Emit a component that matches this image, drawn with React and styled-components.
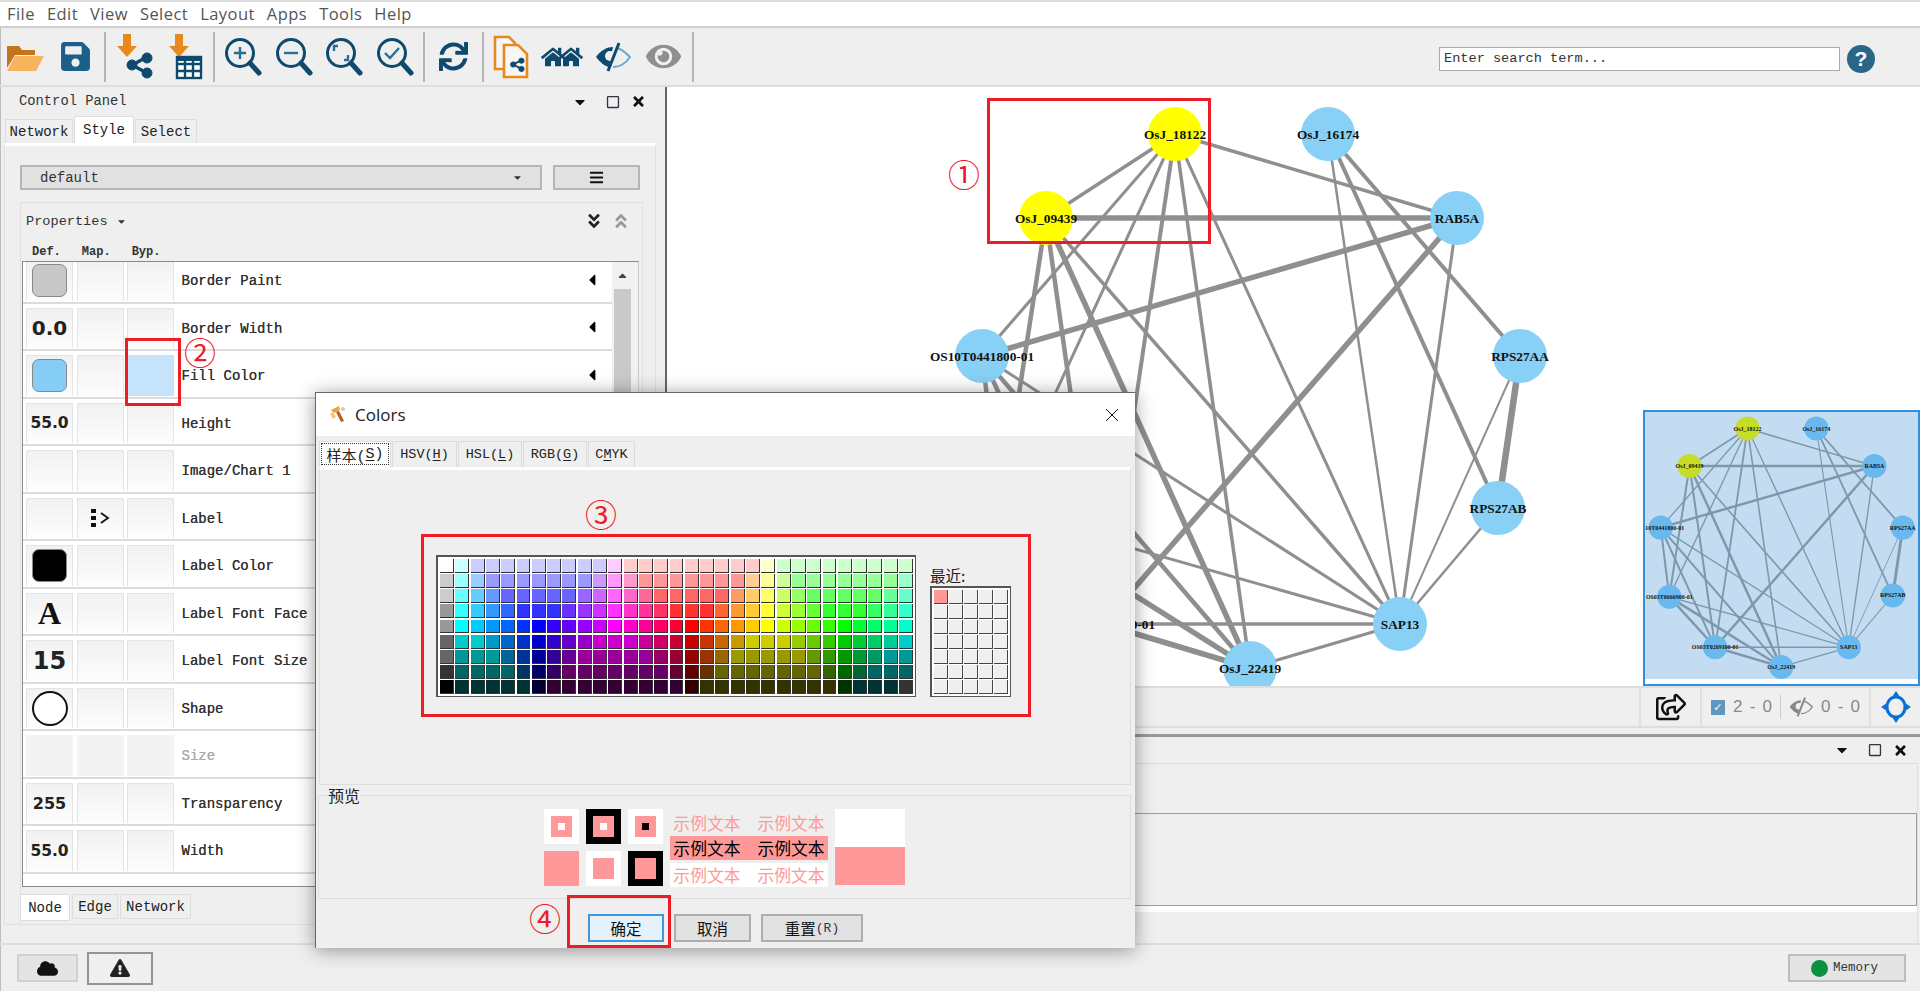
import React from 'react';
import styled, { createGlobalStyle } from 'styled-components';
import { FaSave, FaSync, FaHome, FaEye, FaCloud, FaExclamationTriangle, FaBars, FaAngleDoubleDown, FaAngleDoubleUp, FaRegShareSquare, FaCaretDown, FaCaretLeft, FaCaretUp, FaTimes, FaRegSquare } from 'react-icons/fa';

const Global = createGlobalStyle`
  *, *::before, *::after { box-sizing: border-box; }
  html, body { margin: 0; padding: 0; background: #efefef; }
`;

const MONO = `"Liberation Mono", "Noto Sans CJK SC", monospace`;
const CJK = `"Noto Sans CJK SC", "Liberation Sans", sans-serif`;
const TEAL = '#0f4a6e';
const ORANGE = '#e8891f';

const Page = styled.div`
  position: relative; width: 1920px; height: 991px; overflow: hidden;
  display: flex; flex-direction: column; background: #efefef;
  font-family: ${MONO}; color: #333;
  box-shadow: inset 1px 0 #bdbdbd;
`;

/* ---------- menu + toolbar ---------- */
const MenuBar = styled.div`
  height: 28px; flex: none; display: flex; align-items: center; gap: 12px; padding: 0 0 1px 7px;
  background: #fff; border-top: 2px solid #dcdcdc; border-bottom: 2px solid #cfcfcf;
  font: 16.5px "Open Sans", sans-serif; letter-spacing: .45px; color: #555;
`;
const Toolbar = styled.div`
  height: 59px; flex: none; display: flex; align-items: center; border-bottom: 2px solid #dedede;
`;
const Slot = styled.div`
  width: 50.5px; height: 50px; flex: none; display: flex; align-items: center; justify-content: center;
`;
const Sep = styled.div`
  width: 2px; height: 50px; margin: 0 3px; flex: none; background: #b5b5b5;
`;
const SearchBox = styled.div`
  margin: 4px 0 0 auto; width: 401px; height: 24px; background: #fff; border: 1px solid #aaa;
  padding-left: 4px; line-height: 22px; font-size: 13.6px; color: #333;
`;
const Help = styled.div`
  width: 28px; height: 28px; margin: 4px 45px 0 7px; border-radius: 50%; background: #2a6688; color: #fff;
  display: flex; align-items: center; justify-content: center; font: bold 21px "Liberation Sans", sans-serif;
`;

const Tool = ({ w = 36, h = 40, children }) => (
  <svg width={w} height={h} viewBox={`0 0 ${w} ${h}`}>{children}</svg>
);
const OpenIcon = () => (
  <Tool w={38} h={32}>
    <path d="M1 5h12l3 4h13v5H9L1 27z" fill="#c4741b" />
    <path d="M1 30l8-15h29l-8 15z" fill="#f7b45e" />
  </Tool>
);
const ImportArrow = ({ x }) => <path d={`M${x - 4} 0h8v12h6l-10 11-10-11h6z`} fill={ORANGE} />;
const ShareGlyph = ({ x, y, s = 1 }) => (
  <g transform={`translate(${x} ${y}) scale(${s})`} stroke={TEAL} fill={TEAL}>
    <path d="M19 2L4 10l15 8" fill="none" strokeWidth="3.4" />
    <circle cx="19" cy="3" r="5" /><circle cx="4" cy="10" r="5" /><circle cx="19" cy="18" r="5" />
  </g>
);
const ImportNet = () => (
  <Tool w={40} h={46}><ImportArrow x={13} /><ShareGlyph x={14} y={21} /></Tool>
);
const ImportTable = () => (
  <Tool w={40} h={46}>
    <ImportArrow x={14} />
    <g fill="none" stroke={TEAL} strokeWidth="2.4">
      <rect x="12" y="23" width="24" height="21" fill="#fff" />
      <path d="M12 30h24M12 37h24M20 23v21M28 23v21" />
    </g>
    <rect x="12" y="23" width="24" height="4" fill={TEAL} />
  </Tool>
);
const Magnifier = ({ children }) => (
  <Tool w={38} h={40}>
    <circle cx="16" cy="16" r="13.5" fill="none" stroke={TEAL} strokeWidth="3" />
    <path d="M26 26l9 10" stroke={TEAL} strokeWidth="5" strokeLinecap="round" />
    {children}
  </Tool>
);
const Inner = styled.path`
  fill: none; stroke: #2a6e96; stroke-width: 2.4;
`;
const Docs = () => (
  <Tool w={38} h={44}>
    <g fill="#f7f7f7" stroke={ORANGE} strokeWidth="2.6">
      <path d="M2 2h14l6 6v26H2z" />
      <path d="M11 10h14l9 9v23H11z" />
    </g>
    <ShareGlyph x={18} y={24} s={0.55} />
  </Tool>
);
const HomeWrap = styled.div`
  display: flex; & > svg + svg { margin-left: -6px; }
`;
const Homes = () => (
  <HomeWrap><FaHome size={24} color={TEAL} /><FaHome size={24} color={TEAL} /></HomeWrap>
);
const EyeSlash = ({ w = 36, h = 30, dark = TEAL, light = '#6aa9cf' }) => (
  <svg width={w} height={h} viewBox="0 0 36 30">
    <path d="M1 15C6 8 12 5 18 5l-4 20C9 24 5 20 1 15z" fill={dark} />
    <path d="M22 6c5 1 9 5 13 9-4 6-10 10-17 10" fill="none" stroke={light} strokeWidth="2" />
    <circle cx="15" cy="14" r="5" fill="#efefef" />
    <path d="M24 1L13 29" stroke={dark} strokeWidth="3" />
  </svg>
);

/* ---------- body ---------- */
const Body = styled.div`
  flex: 1; display: flex; min-height: 0;
`;
const LeftPanel = styled.div`
  width: 667px; flex: none; display: flex; flex-direction: column; border-right: 2px solid #666;
`;
const PanelHeader = styled.div`
  height: 29px; flex: none; display: flex; align-items: center; padding: 0 19px 0 19px; font-size: 13.8px;
`;
const HeaderTitle = styled.div` flex: 1; `;
const HeaderIcons = styled.div`
  display: flex; align-items: center; gap: 11px; color: #111;
  & > svg:first-child { margin-right: 7px; }
`;
const TopTabs = styled.div`
  height: 27px; flex: none; display: flex; align-items: flex-end; padding-left: 5px; gap: 1px;
`;
const TopTab = styled.div`
  height: ${p => (p.$active ? 27 : 24)}px; width: ${p => p.$w}px; display: flex; align-items: center; justify-content: center;
  background: ${p => (p.$active ? '#fff' : '#efefef')};
  border: 1px solid #ddd; border-bottom: none; font-size: 14px; color: #222;
`;
const TabContent = styled.div`
  width: 652px; margin-left: 4px; padding: 19px 0 0 15px; border: 1px solid #e0e0e0; border-top: 3px solid #fff;
  height: 782px; flex: none;
`;
const StyleBar = styled.div`
  display: flex; gap: 11px; height: 25px; margin-bottom: 12px;
`;
const DropDown = styled.div`
  width: 522px; display: flex; align-items: center; justify-content: space-between; padding: 0 17px 0 18px;
  background: #e1e1e1; border: 2px solid #b5b5b5; font-size: 14px;
`;
const MenuButton = styled.div`
  width: 87px; display: flex; align-items: center; justify-content: center; background: #e1e1e1; border: 2px solid #b5b5b5;
`;
const PropsBox = styled.div`
  width: 623px; border: 1px solid #e0e0e0; height: 723px; display: flex; flex-direction: column;
`;
const PropHead = styled.div`
  height: 36px; flex: none; display: flex; align-items: center; padding: 0 12px 0 5px; font-size: 13.6px;
`;
const PropHeadTitle = styled.div` flex: 1; display: flex; align-items: center; gap: 8px; `;
const ColHeads = styled.div`
  height: 22px; flex: none; display: flex; font-size: 12px; font-weight: bold; padding: 6px 0 0 11px; gap: 21px; color: #333;
`;
const Table = styled.div`
  height: 626px; flex: none; margin: 0 3px 0 1px; display: flex; overflow: hidden; background: #fff;
  border: 1px solid #8a8a8a; border-right-color: #ccc;
`;
const RowList = styled.div` flex: 1; margin-top: -6px; `;
const Row = styled.div`
  height: 47.5px; display: grid; grid-template-columns: 47px 47px 47px 1fr 29px; column-gap: 3.5px;
  padding: 0 0 0 3px; border-bottom: 2px solid #dcdcdc;
`;
const Cell = styled.div`
  margin: 4px 0 1px; display: flex; align-items: center; justify-content: center;
  background: ${p => (p.$fill ? p.$fill : p.$faint ? '#f3f3f3' : 'linear-gradient(#f1f1f1, #fdfdfd)')};
  border: 1px solid ${p => (p.$fill || p.$faint ? 'transparent' : '#e4e4e4')}; border-bottom: none;
  color: #222; font-family: "DejaVu Sans", sans-serif; font-weight: bold; font-size: ${p => p.$size || 16}px;
`;
const PropSwatch = styled.div`
  width: 35px; height: 33px; border-radius: 7px; background: ${p => p.$color}; border: 1px solid #888;
`;
const SerifA = styled.span`
  font: bold 32px "Liberation Serif", serif; color: #111;
`;
const ShapeRing = styled.div`
  width: 36px; height: 35px; border-radius: 50%; border: 2px solid #111; background: #fff;
`;
const PropName = styled.div`
  display: flex; align-items: center; padding: 5px 0 0 4px; font-size: 14px; color: ${p => (p.$dim ? '#aaa' : '#333')};
  text-shadow: 0 0 .6px ${p => (p.$dim ? '#aaa' : '#333')};
`;
const RowArrow = styled.div`
  display: flex; align-items: center; color: #000; padding-top: 2px;
`;
const ScrollBar = styled.div`
  width: 26px; flex: none; background: #f1f1f1; display: flex; flex-direction: column; padding: 0 7px 0 2px;
`;
const ScrollUp = styled.div`
  height: 27px; display: flex; align-items: center; justify-content: center; color: #444;
`;
const ScrollThumb = styled.div`
  height: 300px; background: #c9c9c9;
`;
const BottomTabs = styled.div`
  display: flex; margin-top: 7px; height: 27px; margin-left: -1px; gap: 2px;
`;
const BottomTab = styled.div`
  width: ${p => p.$w}px; height: ${p => (p.$active ? 27 : 25)}px; background: ${p => (p.$active ? '#fff' : '#efefef')};
  border: 1px solid #ddd; display: flex; align-items: center; justify-content: center; font-size: 14px; color: #222;
`;

/* ---------- right ---------- */
const RightColumn = styled.div`
  flex: 1; min-width: 0; display: flex; flex-direction: column;
`;
const Canvas = styled.div`
  position: relative; height: 601px; flex: none; background: #fff; border-bottom: 2px solid #dedede;
`;
const MiniMap = styled.div`
  position: absolute; right: 0; top: 323px; width: 277px; height: 276px; background: #fff; border: 2px solid #2f8fe0;
`;
const StatusBar = styled.div`
  height: 40px; flex: none; display: flex; justify-content: flex-end; background: #efefef; border-bottom: 2px solid #dedede;
`;
const StatusCell = styled.div`
  width: ${p => p.$w}px; display: flex; align-items: center; justify-content: center; gap: 8px; border-left: 2px solid #e0e0e0;
  font: 17px "Liberation Sans", sans-serif; color: #888; word-spacing: 2.5px;
`;
const Count = styled.span` white-space: pre; `;
const MiniSep = styled.div` width: 1px; height: 24px; background: #ccc; `;
const CheckBox = styled.div`
  width: 14px; height: 15px; background: #5f97bd; color: #fff; font: bold 11px "DejaVu Sans", sans-serif;
  display: flex; align-items: center; justify-content: center;
`;
const LowerPanel = styled.div`
  flex: 1; margin-top: 6px; border-top: 3px solid #999; display: flex; flex-direction: column; min-height: 0;
`;
const LowerHead = styled.div`
  height: 26px; flex: none; display: flex; justify-content: flex-end; align-items: center; padding-right: 12px;
`;
const LowerBody = styled.div`
  flex: 1; margin-right: 2px; border: 1px solid #ddd; border-bottom: none; padding-top: 49px; display: flex; flex-direction: column;
`;
const LowerBox = styled.div`
  height: 93px; border: 1px solid #9aa0a6; border-left: none; background: #efefef;
`;
const WhiteStrip = styled.div` height: 6px; background: #fff; `;
const Footer = styled.div`
  height: 48px; flex: none; display: flex; align-items: center; gap: 9px; padding: 0 14px 0 17px; border-top: 2px solid #dedede;
`;
const FootBtn = styled.div`
  width: ${p => p.$w}px; height: ${p => p.$h}px; display: flex; align-items: center; justify-content: center;
  background: ${p => (p.$flat ? '#e4e4e4' : '#efefef')}; border: 2px solid ${p => (p.$flat ? '#d0d0d0' : '#8f959b')}; color: #222;
`;
const MemoryBtn = styled.div`
  margin-left: auto; width: 118px; height: 28px; display: flex; align-items: center; gap: 5px; padding-left: 21px;
  background: #e4e4e4; border: 2px solid #bdbdbd; font-size: 12.5px;
`;
const GreenDot = styled.div`
  width: 17px; height: 17px; border-radius: 50%; background: #0d9140;
`;

/* ---------- graph ---------- */
const N = {
  a: [1175, 133, 'OsJ_18122', 1], b: [1046, 217, 'OsJ_09439', 1], c: [1328, 133, 'OsJ_16174'], d: [1457, 217, 'RAB5A'],
  e: [1520, 355, 'RPS27AA'], f: [1498, 507, 'RPS27AB'], g: [1400, 623, 'SAP13'], h: [1250, 667, 'OsJ_22419'],
  i: [1103, 623, 'OS03T0269100-01'], j: [1001, 510, 'OS03T0666900-01'], k: [982, 355, 'OS10T0441800-01'],
};
const E = [
  ['a','b',3.5],['a','d',3.5],['a','k',3],['a','j',3],['a','i',4],['a','h',3.5],['a','g',3],
  ['b','d',5.5],['b','j',4.5],['b','i',4.5],['b','h',5.5],['b','g',3.5],
  ['c','g',2.5],['c','f',4],['c','e',4],
  ['d','k',5.5],['d','i',5.5],['d','g',3],
  ['e','f',6.5],['e','g',2],['f','g',2.5],
  ['g','h',3],['g','i',3.5],['g','j',3],['g','k',3],
  ['k','j',4.5],['k','i',4.5],['k','h',4.5],['j','i',5.5],['j','h',5.5],['i','h',5.5],
];
const NodeLabel = styled.text`
  font: bold 13.3px "Liberation Serif", serif; fill: #111; text-anchor: middle; dominant-baseline: central;
`;
const Graph = ({ viewBox, width, height, edge, blue, yellow, className }) => (
  <svg className={className} width={width} height={height} viewBox={viewBox} preserveAspectRatio="none">
    {E.map(([s, t, w]) => (
      <line key={s + t} x1={N[s][0]} y1={N[s][1]} x2={N[t][0]} y2={N[t][1]} stroke={edge} strokeWidth={w} />
    ))}
    {Object.entries(N).map(([k, [x, y, label, sel]]) => (
      <g key={k}>
        <circle cx={x} cy={y} r="27" fill={sel ? yellow : blue} />
        <NodeLabel x={x} y={y}>{label}</NodeLabel>
      </g>
    ))}
  </svg>
);
const MainGraph = styled(Graph)` display: block; `;

/* ---------- colour dialog ---------- */
const Dialog = styled.div`
  position: absolute; left: 315px; top: 392px; width: 820px; height: 556px; display: flex; flex-direction: column;
  background: #efefef; border: 1px solid #666; border-bottom: none; border-right: none; box-shadow: 0 2px 18px rgba(0,0,0,.4);
`;
const TitleBar = styled.div`
  height: 43px; flex: none; background: #fff; display: flex; align-items: center; gap: 8px; padding: 0 16px 0 13px;
  font: 17px "Open Sans", sans-serif; color: #222;
`;
const TitleText = styled.div` flex: 1; `;
const DlgTabs = styled.div`
  height: 31px; flex: none; display: flex; padding: 5px 0 0 3px; gap: 1px;
`;
const DlgTab = styled.div`
  width: ${p => p.$w}px; height: 26px; display: flex; align-items: center; justify-content: center;
  border: 1px solid #dcdcdc; border-bottom: none; font: 13.5px ${MONO}; color: #222;
  background: #efefef;
  ${p => p.$active && `background: #fff; outline: 1px dotted #333; outline-offset: -3px; font-size: 15px;`}
  u { text-underline-offset: 2px; }
`;
const DlgPanel = styled.div`
  margin: 0 4px 0 3px; height: 318px; flex: none; border: 1px solid #ddd; border-top: 3px solid #fff;
  display: flex; padding: 85px 0 0 116px; gap: 14px;
`;
const SwatchGrid = styled.div`
  width: 480px; height: 142px; flex: none; display: grid; grid-template-columns: repeat(31, 1fr); grid-template-rows: repeat(9, 1fr);
  padding: 2px; gap: 1.4px; background: #fff; border: 2px solid #555; border-right-width: 1px; border-bottom-width: 1px;
`;
const Swatch = styled.div`
  background: ${p => p.$c}; border-right: 1.5px solid #333; border-bottom: 1.5px solid #333;
`;
const RecentCol = styled.div`
  width: 81px; flex: none; margin-top: 9px; display: flex; flex-direction: column;
`;
const RecentLabel = styled.div`
  font: 15.5px ${CJK}; color: #222; height: 22px; line-height: 22px;
`;
const RecentGrid = styled.div`
  height: 111px; display: grid; grid-template-columns: repeat(5, 1fr); grid-template-rows: repeat(7, 1fr);
  gap: 1px; padding: 2px; background: #fff; border: 2px solid #555; border-right-width: 1px; border-bottom-width: 1px;
`;
const RecentCell = styled(Swatch)` border-right-color: #444; border-bottom-color: #444; `;
const PreviewSet = styled.fieldset`
  margin: 2px 4px 0 2px; padding: 6px 0 0 225px; height: 112px; flex: none; border: 1px solid #ddd; border-radius: 0;
  display: flex; gap: 7px; min-width: 0;
`;
const PreviewLegend = styled.legend`
  margin-left: -216px; padding: 0; font: 16px/16px ${CJK}; color: #222;
`;
const PreviewSquares = styled.div`
  display: grid; grid-template-columns: repeat(3, 35px); grid-template-rows: repeat(2, 35px); gap: 7px 7px;
`;
const PreviewSq = styled.div`
  background: ${p => p.$outer}; display: flex; align-items: center; justify-content: center;
`;
const PreviewMid = styled.div`
  width: 21px; height: 21px; background: #ff9999; display: flex; align-items: center; justify-content: center;
`;
const PreviewDot = styled.div`
  width: 7px; height: 7px; background: ${p => p.$c};
`;
const PreviewTexts = styled.div`
  width: 158px; flex: none; display: flex; flex-direction: column; padding-top: 5px; gap: 3px; font: 16.8px/1 ${CJK};
`;
const PreviewLine = styled.div`
  height: ${p => p.$h}px; display: flex; align-items: center; justify-content: center; gap: 17px;
  background: ${p => p.$bg}; color: ${p => p.$fg};
`;
const BigPreview = styled.div`
  width: 70px; height: 76px; flex: none; background: linear-gradient(#fff 50%, #ff9999 50%);
`;
const DlgButtons = styled.div`
  display: flex; gap: 10px; padding: 15px 0 0 272px;
`;
const DlgBtn = styled.div`
  width: ${p => p.$w}px; height: 28px; display: flex; align-items: center; justify-content: center;
  font: 15.5px ${CJK}; color: #111;
  background: ${p => (p.$primary ? '#e5f1fb' : '#e1e1e1')}; border: 2px solid ${p => (p.$primary ? '#3f97dc' : '#adadad')};
`;
const MonoSpan = styled.span` font: 13px ${MONO}; color: #335; `;

/* ---------- annotations ---------- */
const RedBox = styled.div`
  position: absolute; left: ${p => p.$x}px; top: ${p => p.$y}px; width: ${p => p.$w}px; height: ${p => p.$h}px;
  border: 3px solid #ee1c25; pointer-events: none;
`;
const Mark = styled.div`
  position: absolute; left: ${p => p.$x - 20}px; top: ${p => p.$y - 20}px; width: 40px; height: 40px;
  display: flex; align-items: center; justify-content: center;
  font: 32px/40px ${CJK}; color: #ee1c25;
`;

/* ---------- data ---------- */
const expand = s => s.split(' ').flatMap(t => {
  const [c, n] = t.split('*');
  return Array(Number(n || 1)).fill('#' + c);
});
const SWATCHES = [
  'ffffff ccffff ccccff*9 ffccff ffcccc*9 ffffcc ccffcc*9',
  'cccccc 99ffff 99ccff 9999ff*7 cc99ff ff99ff ff99cc ff9999*7 ffcc99 ffff99 ccff99 99ff99*7 99ffcc',
  'cccccc 66ffff 66ccff 6699ff 6666ff*5 9966ff cc66ff ff66ff ff66cc ff6699 ff6666*5 ff9966 ffcc66 ffff66 ccff66 99ff66 66ff66*5 66ff99 66ffcc',
  '999999 33ffff 33ccff 3399ff 3366ff 3333ff*3 6633ff 9933ff cc33ff ff33ff ff33cc ff3399 ff3366 ff3333*3 ff6633 ff9933 ffcc33 ffff33 ccff33 99ff33 66ff33 33ff33*3 33ff66 33ff99 33ffcc',
  '999999 00ffff 00ccff 0099ff 0066ff 0033ff 0000ff 3300ff 6600ff 9900ff cc00ff ff00ff ff00cc ff0099 ff0066 ff0033 ff0000 ff3300 ff6600 ff9900 ffcc00 ffff00 ccff00 99ff00 66ff00 33ff00 00ff00 00ff33 00ff66 00ff99 00ffcc',
  '666666 00cccc*2 0099cc 0066cc 0033cc 0000cc 3300cc 6600cc 9900cc cc00cc*3 cc0099 cc0066 cc0033 cc0000 cc3300 cc6600 cc9900 cccc00*3 99cc00 66cc00 33cc00 00cc00 00cc33 00cc66 00cc99 00cccc',
  '666666 009999*3 006699 003399 000099 330099 660099 990099*5 990066 990033 990000 993300 996600 999900*5 669900 339900 009900 009933 009966 009999*2',
  '333333 006666*4 003366 000066 330066 660066*7 660033 660000 663300 666600*7 336600 006600 006633 006666*3',
  '000000 003333*5 000033 330033*9 330000 333300*9 003300 003333*3 333333',
].flatMap(expand);

const ROWS = [
  ['Border Paint', { swatch: '#c8c8c8' }],
  ['Border Width', { text: '0.0', size: 20 }],
  ['Fill Color', { swatch: '#85cdf5' }, null, '#c5e3fb'],
  ['Height', { text: '55.0', size: 15.5 }],
  ['Image/Chart 1', {}],
  ['Label', {}, true],
  ['Label Color', { swatch: '#000' }],
  ['Label Font Face', { a: true }],
  ['Label Font Size', { text: '15', size: 24 }],
  ['Shape', { ring: true }],
  ['Size', {}, null, null, true],
  ['Transparency', { text: '255', size: 16 }],
  ['Width', { text: '55.0', size: 15.5 }],
];
const MapGlyph = () => (
  <svg width="20" height="18" viewBox="0 0 20 18">
    <rect x="1" y="0" width="5" height="4" fill="#111" /><rect x="1" y="7" width="5" height="4" fill="#111" /><rect x="1" y="14" width="5" height="4" fill="#111" />
    <path d="M11 4l7 5-7 5" fill="none" stroke="#111" strokeWidth="1.8" />
  </svg>
);

const MiniFill = styled.div`
  height: 267px; background: #c3dcf1; overflow: hidden; & > svg { display: block; }
`;
const MiniInner = () => (
  <MiniFill>
    <Graph viewBox="947 96 607 598" width={273} height={267} edge="#7d98ac" blue="#6ab9ee" yellow="#c7dc27" />
  </MiniFill>
);
const Target = () => (
  <svg width="30" height="32" viewBox="0 0 30 32">
    <path d="M15 6c5 0 9 4 9 10s-4 10-9 10-9-4-9-10 4-10 9-10z" fill="none" stroke="#0b6fd6" strokeWidth="3" />
    <path d="M15 0l4 6h-8zM15 32l-4-6h8zM0 16l6-4v8zM30 16l-6 4v-8z" fill="#0b6fd6" />
  </svg>
);

export default function App() {
  return (
    <Page>
      <Global />
      <MenuBar>
        {['File', 'Edit', 'View', 'Select', 'Layout', 'Apps', 'Tools', 'Help'].map(m => <span key={m}>{m}</span>)}
      </MenuBar>
      <Toolbar>
        <Slot><OpenIcon /></Slot>
        <Slot><FaSave size={33} color="#1c5f88" /></Slot>
        <Sep />
        <Slot><ImportNet /></Slot>
        <Slot><ImportTable /></Slot>
        <Sep />
        <Slot><Magnifier><Inner d="M10 16h12M16 10v12" /></Magnifier></Slot>
        <Slot><Magnifier><Inner d="M9 16h14" /></Magnifier></Slot>
        <Slot><Magnifier><Inner d="M13 9H9v5M19 23h4v-5" /></Magnifier></Slot>
        <Slot><Magnifier><Inner d="M9 16l5 5 9-10" /></Magnifier></Slot>
        <Sep />
        <Slot><FaSync size={29} color={TEAL} /></Slot>
        <Sep />
        <Slot><Docs /></Slot>
        <Slot><Homes /></Slot>
        <Slot><EyeSlash /></Slot>
        <Slot><FaEye size={35} color="#8f8f8f" /></Slot>
        <Sep />
        <SearchBox>Enter search term...</SearchBox>
        <Help>?</Help>
      </Toolbar>
      <Body>
        <LeftPanel>
          <PanelHeader>
            <HeaderTitle>Control Panel</HeaderTitle>
            <HeaderIcons>
              <FaCaretDown size={16} />
              <FaRegSquare size={14} color="#334" />
              <FaTimes size={15} />
            </HeaderIcons>
          </PanelHeader>
          <TopTabs>
            <TopTab $w={68}>Network</TopTab>
            <TopTab $w={60} $active>Style</TopTab>
            <TopTab $w={62}>Select</TopTab>
          </TopTabs>
          <TabContent>
            <StyleBar>
              <DropDown>default<FaCaretDown size={11} /></DropDown>
              <MenuButton><FaBars size={15} color="#111" /></MenuButton>
            </StyleBar>
            <PropsBox>
              <PropHead>
                <PropHeadTitle>Properties <FaCaretDown size={11} /></PropHeadTitle>
                <FaAngleDoubleDown size={18} color="#222" />
                <FaAngleDoubleUp size={18} color="#999" style={{ marginLeft: 9 }} />
              </PropHead>
              <ColHeads><span>Def.</span><span>Map.</span><span>Byp.</span></ColHeads>
              <Table>
                <RowList>
                  {ROWS.map(([name, def, mapped, byp, dim]) => (
                    <Row key={name}>
                      <Cell $size={def.size} $faint={dim}>
                        {def.swatch && <PropSwatch $color={def.swatch} />}
                        {def.text}
                        {def.a && <SerifA>A</SerifA>}
                        {def.ring && <ShapeRing />}
                      </Cell>
                      <Cell $faint={dim}>{mapped && <MapGlyph />}</Cell>
                      <Cell $fill={byp} $faint={dim} />
                      <PropName $dim={dim}>{name}</PropName>
                      <RowArrow>{!dim && <FaCaretLeft size={18} />}</RowArrow>
                    </Row>
                  ))}
                </RowList>
                <ScrollBar>
                  <ScrollUp><FaCaretUp size={13} /></ScrollUp>
                  <ScrollThumb />
                </ScrollBar>
              </Table>
              <BottomTabs>
                <BottomTab $w={50} $active>Node</BottomTab>
                <BottomTab $w={46}>Edge</BottomTab>
                <BottomTab $w={71}>Network</BottomTab>
              </BottomTabs>
            </PropsBox>
          </TabContent>
        </LeftPanel>
        <RightColumn>
          <Canvas>
            <MainGraph viewBox="667 86 1253 599" width={1253} height={599} edge="#8f8f8f" blue="#88d0f5" yellow="#ffff00" />
            <MiniMap>
              <MiniInner />
            </MiniMap>
          </Canvas>
          <StatusBar>
            <StatusCell $w={61}><FaRegShareSquare size={30} color="#111" /></StatusCell>
            <StatusCell $w={169}>
              <CheckBox>✓</CheckBox><Count>2 - 0</Count><MiniSep />
              <EyeSlash w={24} h={20} dark="#888" light="#888" /><Count>0 - 0</Count>
            </StatusCell>
            <StatusCell $w={51}><Target /></StatusCell>
          </StatusBar>
          <LowerPanel>
            <LowerHead>
              <HeaderIcons>
                <FaCaretDown size={16} />
                <FaRegSquare size={14} color="#334" />
                <FaTimes size={15} />
              </HeaderIcons>
            </LowerHead>
            <LowerBody>
              <LowerBox />
              <WhiteStrip />
            </LowerBody>
          </LowerPanel>
        </RightColumn>
      </Body>
      <Footer>
        <FootBtn $w={61} $h={28} $flat><FaCloud size={21} color="#111" /></FootBtn>
        <FootBtn $w={66} $h={33}><FaExclamationTriangle size={20} color="#222" /></FootBtn>
        <MemoryBtn><GreenDot />Memory</MemoryBtn>
      </Footer>

      <Dialog>
        <TitleBar>
          <svg width="18" height="20" viewBox="0 0 18 20">
            <path d="M2 5l8-4 1 4-6 3z" fill="#e9a13b" /><path d="M7 7l5 10 3-1-5-10z" fill="#c25a1c" /><path d="M1 9l3 5 3-2-3-5z" fill="#f3c680" /><circle cx="14" cy="4" r="2" fill="#c9c9c9" />
          </svg>
          <TitleText>Colors</TitleText>
          <svg width="14" height="14" viewBox="0 0 14 14"><path d="M1 1l12 12M13 1L1 13" stroke="#111" strokeWidth="1" /></svg>
        </TitleBar>
        <DlgTabs>
          <DlgTab $w={72} $active>样本(<u>S</u>)</DlgTab>
          <DlgTab $w={65}>HSV(<u>H</u>)</DlgTab>
          <DlgTab $w={64}>HSL(<u>L</u>)</DlgTab>
          <DlgTab $w={64}>RGB(<u>G</u>)</DlgTab>
          <DlgTab $w={47}>C<u>M</u>YK</DlgTab>
        </DlgTabs>
        <DlgPanel>
          <SwatchGrid>
            {SWATCHES.map((c, i) => <Swatch key={i} $c={c} />)}
          </SwatchGrid>
          <RecentCol>
            <RecentLabel>最近:</RecentLabel>
            <RecentGrid>
              {Array.from({ length: 35 }, (_, i) => <RecentCell key={i} $c={i === 0 ? '#ff9999' : '#efefef'} />)}
            </RecentGrid>
          </RecentCol>
        </DlgPanel>
        <PreviewSet>
          <PreviewLegend>预览</PreviewLegend>
          <PreviewSquares>
            <PreviewSq $outer="#fff"><PreviewMid><PreviewDot $c="#fff" /></PreviewMid></PreviewSq>
            <PreviewSq $outer="#000"><PreviewMid><PreviewDot $c="#fff" /></PreviewMid></PreviewSq>
            <PreviewSq $outer="#fff"><PreviewMid><PreviewDot $c="#000" /></PreviewMid></PreviewSq>
            <PreviewSq $outer="#ff9999" />
            <PreviewSq $outer="#fff"><PreviewMid /></PreviewSq>
            <PreviewSq $outer="#000"><PreviewMid /></PreviewSq>
          </PreviewSquares>
          <PreviewTexts>
            <PreviewLine $h={19} $fg="#ff9999"><span>示例文本</span><span>示例文本</span></PreviewLine>
            <PreviewLine $h={24} $bg="#ff9999" $fg="#000"><span>示例文本</span><span>示例文本</span></PreviewLine>
            <PreviewLine $h={24} $bg="#fff" $fg="#ff9999"><span>示例文本</span><span>示例文本</span></PreviewLine>
          </PreviewTexts>
          <BigPreview />
        </PreviewSet>
        <DlgButtons>
          <DlgBtn $w={76} $primary>确定</DlgBtn>
          <DlgBtn $w={77}>取消</DlgBtn>
          <DlgBtn $w={102}>重置<MonoSpan>(R)</MonoSpan></DlgBtn>
        </DlgButtons>
      </Dialog>

      <RedBox $x={987} $y={98} $w={224} $h={146} />
      <RedBox $x={125} $y={338} $w={56} $h={68} />
      <RedBox $x={421} $y={534} $w={610} $h={183} />
      <RedBox $x={567} $y={895} $w={104} $h={53} />
      <Mark $x={964} $y={173}>①</Mark>
      <Mark $x={200} $y={351}>②</Mark>
      <Mark $x={601} $y={513}>③</Mark>
      <Mark $x={545} $y={917}>④</Mark>
    </Page>
  );
}
